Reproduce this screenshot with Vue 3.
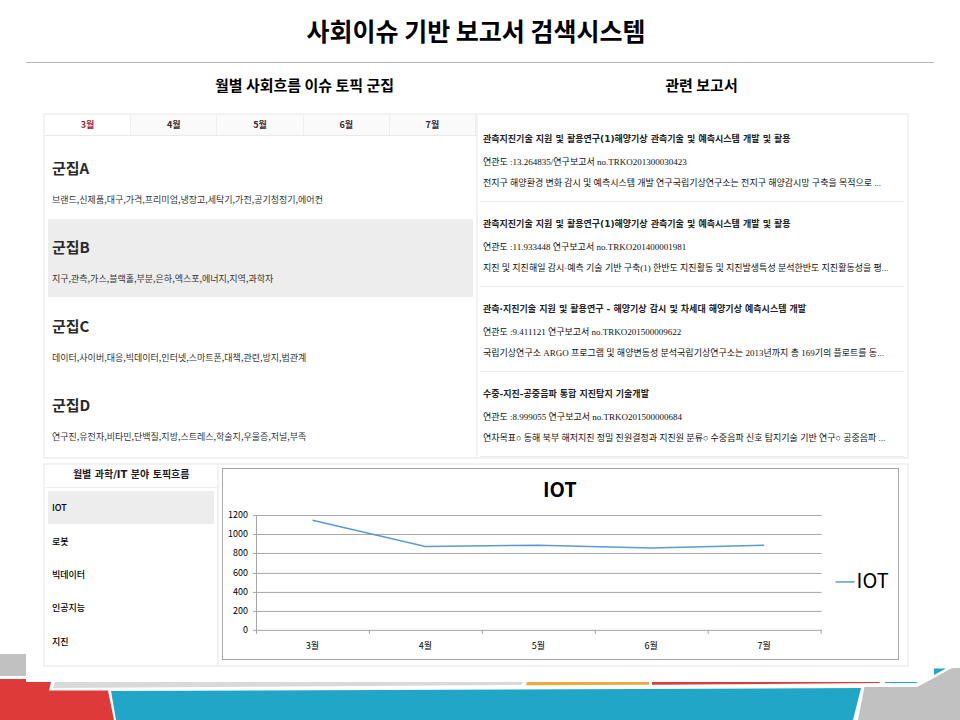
<script setup>
import { ref, computed } from 'vue'

const months = ['3월', '4월', '5월', '6월', '7월']
const activeMonth = ref('3월')

const clusters = [
  { name: '군집A', words: '브랜드,신제품,대구,가격,프리미엄,냉장고,세탁기,가전,공기청정기,에어컨' },
  { name: '군집B', words: '지구,관측,가스,블랙홀,부분,은하,엑스포,에너지,지역,과학자' },
  { name: '군집C', words: '데이터,사이버,대응,빅데이터,인터넷,스마트폰,대책,관련,방지,법관계' },
  { name: '군집D', words: '연구진,유전자,비타민,단백질,지방,스트레스,학술지,우울증,저널,부족' },
]
const activeCluster = ref('군집B')

const reports = [
  {
    title: '관측지진기술 지원 및 활용연구(1)해양기상 관측기술 및 예측시스템 개발 및 활용',
    meta: '연관도 :13.264835/연구보고서 no.TRKO201300030423',
    text: '전지구 해양환경 변화 감시 및 예측시스템 개발 연구국립기상연구소는 전지구 해양감시망 구축을 목적으로 ...',
  },
  {
    title: '관측지진기술 지원 및 활용연구(1)해양기상 관측기술 및 예측시스템 개발 및 활용',
    meta: '연관도 :11.933448 연구보고서 no.TRKO201400001981',
    text: '지진 및 지진해일 감시·예측 기술 기반 구축(1) 한반도 지진활동 및 지진발생특성 분석한반도 지진활동성을 평...',
  },
  {
    title: '관측·지진기술 지원 및 활용연구 - 해양기상 감시 및 차세대 해양기상 예측시스템 개발',
    meta: '연관도 :9.411121 연구보고서 no.TRKO201500009622',
    text: '국립기상연구소 ARGO 프로그램 및 해양변동성 분석국립기상연구소는 2013년까지 총 169기의 플로트를 동...',
  },
  {
    title: '수중-지진-공중음파 통합 지진탐지 기술개발',
    meta: '연관도 :8.999055 연구보고서 no.TRKO201500000684',
    text: '연차목표○ 동해 북부 해저지진 정밀 진원결정과 지진원 분류○ 수중음파 신호 탐지기술 기반 연구○ 공중음파 ...',
  },
]

const topics = ['IOT', '로봇', '빅데이터', '인공지능', '지진']
const activeTopic = ref('IOT')

const plot = { left: 34, right: 599, top: 46, bottom: 161, max: 1200 }
const values = [1145, 870, 885, 855, 885]
const step = (plot.right - plot.left) / values.length
const yOf = (v) => plot.bottom - (v / plot.max) * (plot.bottom - plot.top)
const gridValues = [1200, 1000, 800, 600, 400, 200, 0]
const gridLines = gridValues.map((v) => ({ v, y: Math.round(yOf(v)) + 0.5 }))
const xTicks = months.map((_, i) => Math.round(plot.left + step * (i + 1)) - 0.5)
const xLabels = months.map((m, i) => ({ m, x: plot.left - 1 + step * (i + 0.5) }))
const line = computed(() =>
  values.map((v, i) => `${plot.left - 1 + step * (i + 0.5)},${yOf(v)}`).join(' ')
)
</script>

<template>
  <div class="page">
    <svg class="decor" viewBox="0 0 960 66" aria-hidden="true">
      <path d="M0 0H26V22H0Z" fill="#c1c1c1" />
      <path d="M0 25H26V28H51L49 36.500H108L114 66H0Z" fill="#df3a3a" />
      <path d="M55 28H523.500L521 31L53 34Z" fill="#d9d9d9" />
      <path d="M111 37L861 34L853 66H116Z" fill="#22a6c7" />
      <path d="M527 28H649V30.800L526 31.200Z" fill="#f2a73b" />
      <path d="M652 28H880L879 29L652 30.800Z" fill="#df3a3a" />
      <path d="M885 28H918L916 29H885Z" fill="#22a6c7" />
      <path d="M934 14.500H946L934 21Z" fill="#22a6c7" />
      <path d="M864.500 33H917L934 24L950 15Q952 14 955 14H960V66H858Z" fill="#c1c1c1" />
    </svg>

    <main class="sheet">
      <h1>사회이슈 기반 보고서 검색시스템</h1>

      <div class="content">
        <div class="captions">
          <h2 class="left-caption">월별 사회흐름 이슈 토픽 군집</h2>
          <h2 class="right-caption">관련 보고서</h2>
        </div>

        <div class="upper">
          <section class="cluster-panel">
            <div class="tabs" role="tablist">
              <button
                v-for="m in months"
                :key="m"
                type="button"
                role="tab"
                :aria-selected="m === activeMonth"
                class="tab"
                :class="{ active: m === activeMonth }"
                @click="activeMonth = m"
              >{{ m }}</button>
            </div>
            <div class="clusters">
              <button
                v-for="c in clusters"
                :key="c.name"
                type="button"
                class="cluster"
                :class="{ active: c.name === activeCluster }"
                @click="activeCluster = c.name"
              >
                <span class="cluster-name">{{ c.name }}</span>
                <span class="cluster-words">{{ c.words }}</span>
              </button>
            </div>
          </section>

          <section class="report-panel">
            <article v-for="(r, i) in reports" :key="i" class="report">
              <a href="#" class="report-title">{{ r.title }}</a>
              <p class="report-meta">{{ r.meta }}</p>
              <p class="report-text">{{ r.text }}</p>
            </article>
          </section>
        </div>

        <div class="lower">
          <section class="topic-panel">
            <h3>월별 과학/IT 분야 토픽흐름</h3>
            <div class="topics">
              <button
                v-for="t in topics"
                :key="t"
                type="button"
                class="topic"
                :class="{ active: t === activeTopic }"
                @click="activeTopic = t"
              >{{ t }}</button>
            </div>
          </section>

          <section class="chart-panel">
            <div class="chart-box">
              <svg class="chart" viewBox="0 0 675 190" role="img">
                <text x="337" y="28" class="chart-title">IOT</text>
                <g v-for="g in gridLines" :key="g.v">
                  <line :x1="plot.left - 4" :x2="plot.right" :y1="g.y" :y2="g.y" class="axis" />
                  <text :x="plot.left - 9" :y="g.y + 3" class="y-label">{{ g.v }}</text>
                </g>
                <line :x1="plot.left - 0.5" :x2="plot.left - 0.5" :y1="plot.top" :y2="plot.bottom + 4" class="axis" />
                <line v-for="x in xTicks" :key="x" :x1="x" :x2="x" :y1="plot.bottom" :y2="plot.bottom + 4" class="axis" />
                <text v-for="l in xLabels" :key="l.m" :x="l.x" y="180" class="x-label">{{ l.m }}</text>
                <polyline :points="line" class="series" />
                <line x1="613" x2="632" y1="113" y2="113" class="series" />
                <text x="634" y="119" class="legend">IOT</text>
              </svg>
            </div>
          </section>
        </div>
      </div>
    </main>
  </div>
</template>

<style>
body {
  background: #fff;
}
</style>

<style scoped>
.page {
  position: relative;
  box-sizing: border-box;
  min-height: 100vh;
  padding: 0 26px 53px;
  font-family: "Noto Sans CJK KR", "Liberation Sans", sans-serif;
  color: #000;
}

.decor {
  position: absolute;
  left: 0;
  bottom: 0;
  width: 100%;
}

.sheet {
  position: relative;
}

h1,
h2,
h3,
p {
  margin: 0;
}

button {
  margin: 0;
  padding: 0;
  border: 0;
  background: none;
  font-family: inherit;
  color: inherit;
  cursor: pointer;
}

h1 {
  padding: 12px 8px 14px 0;
  border-bottom: 1px solid #b8b8b8;
  font-size: 25px;
  line-height: 36px;
  font-weight: 700;
  text-align: center;
}

.content {
  padding: 0 25px 0 17px;
}

.captions {
  display: grid;
  grid-template-columns: 1fr 1fr;
  padding: 12px 0 18px;
}

h2 {
  font-size: 15px;
  line-height: 20px;
  font-weight: 700;
  text-align: center;
}

.left-caption {
  padding-left: 90px;
}

.right-caption {
  padding-left: 18px;
}

.upper {
  display: grid;
  grid-template-columns: 1fr 1fr;
  border: 2px solid #f2f2f2;
}

.cluster-panel {
  display: flex;
  flex-direction: column;
}

.tabs {
  display: grid;
  grid-template-columns: repeat(5, 1fr);
}

.tab {
  border-right: 1px solid #eee;
  border-bottom: 1px solid #e9e9e9;
  background: #fafafa;
  font-size: 9px;
  line-height: 20px;
  font-weight: 700;
  color: #332a36;
}

.tab.active {
  background: #fff;
  color: #a3163a;
}

.clusters {
  display: grid;
  gap: 1px;
  padding: 4px 3px 2px 3px;
}

.cluster {
  display: flex;
  flex-direction: column;
  gap: 12px;
  padding: 16px 4px 10px;
  text-align: left;
}

.cluster.active,
.topic.active {
  background: #ededed;
}

.cluster-name {
  font-size: 15px;
  line-height: 24px;
  font-weight: 700;
  color: #2a2a2a;
}

.cluster-words {
  font-size: 9px;
  line-height: 16px;
  color: #333;
}

.report-panel {
  min-width: 0;
  padding: 2px 3px 0 2px;
  border-left: 2px solid #f2f2f2;
}

.report {
  padding: 14px 0 10px 3px;
  border-bottom: 1px solid #eaeaea;
  font-size: 9px;
  line-height: 16px;
  white-space: nowrap;
}

.report-title {
  display: block;
  margin-bottom: 7px;
  font-family: "DejaVu Sans", "Noto Sans CJK KR", sans-serif;
  font-weight: 700;
  color: #222;
  text-decoration: none;
}

.report-meta,
.report-text {
  font-family: "Liberation Serif", "Noto Sans CJK KR", serif;
  color: #111;
}

.report-meta {
  margin-bottom: 5px;
}

.lower {
  display: grid;
  grid-template-columns: 1fr 4fr;
  margin-top: 4px;
  border: 2px solid #f2f2f2;
}

.topic-panel {
  display: flex;
  flex-direction: column;
}

h3 {
  border-bottom: 1px solid #eee;
  font-family: "DejaVu Sans", "Noto Sans CJK KR", sans-serif;
  font-size: 10px;
  line-height: 20px;
  padding-bottom: 2px;
  font-weight: 700;
  text-align: center;
  color: #221a22;
}

.topics {
  flex: 1;
  display: grid;
  grid-auto-rows: 1fr;
  padding: 3px 3px 7px;
}

.topic {
  padding: 0 4px;
  font-size: 9px;
  font-weight: 500;
  text-align: left;
}

.chart-panel {
  padding: 3px 8px 5px 3px;
  border-left: 2px solid #f2f2f2;
}

.chart-box {
  border: 1px solid #a6a6a6;
}

.chart {
  display: block;
  width: 100%;
}

.axis {
  stroke: #a6a6a6;
  stroke-width: 1;
}

.series {
  fill: none;
  stroke: #5b9bd5;
  stroke-width: 1.5;
}

.chart-title {
  font-size: 20px;
  font-weight: 700;
  text-anchor: middle;
}

.y-label {
  font-size: 9px;
  text-anchor: end;
}

.x-label {
  font-size: 9px;
  text-anchor: middle;
}

.legend {
  font-size: 20px;
}
</style>
